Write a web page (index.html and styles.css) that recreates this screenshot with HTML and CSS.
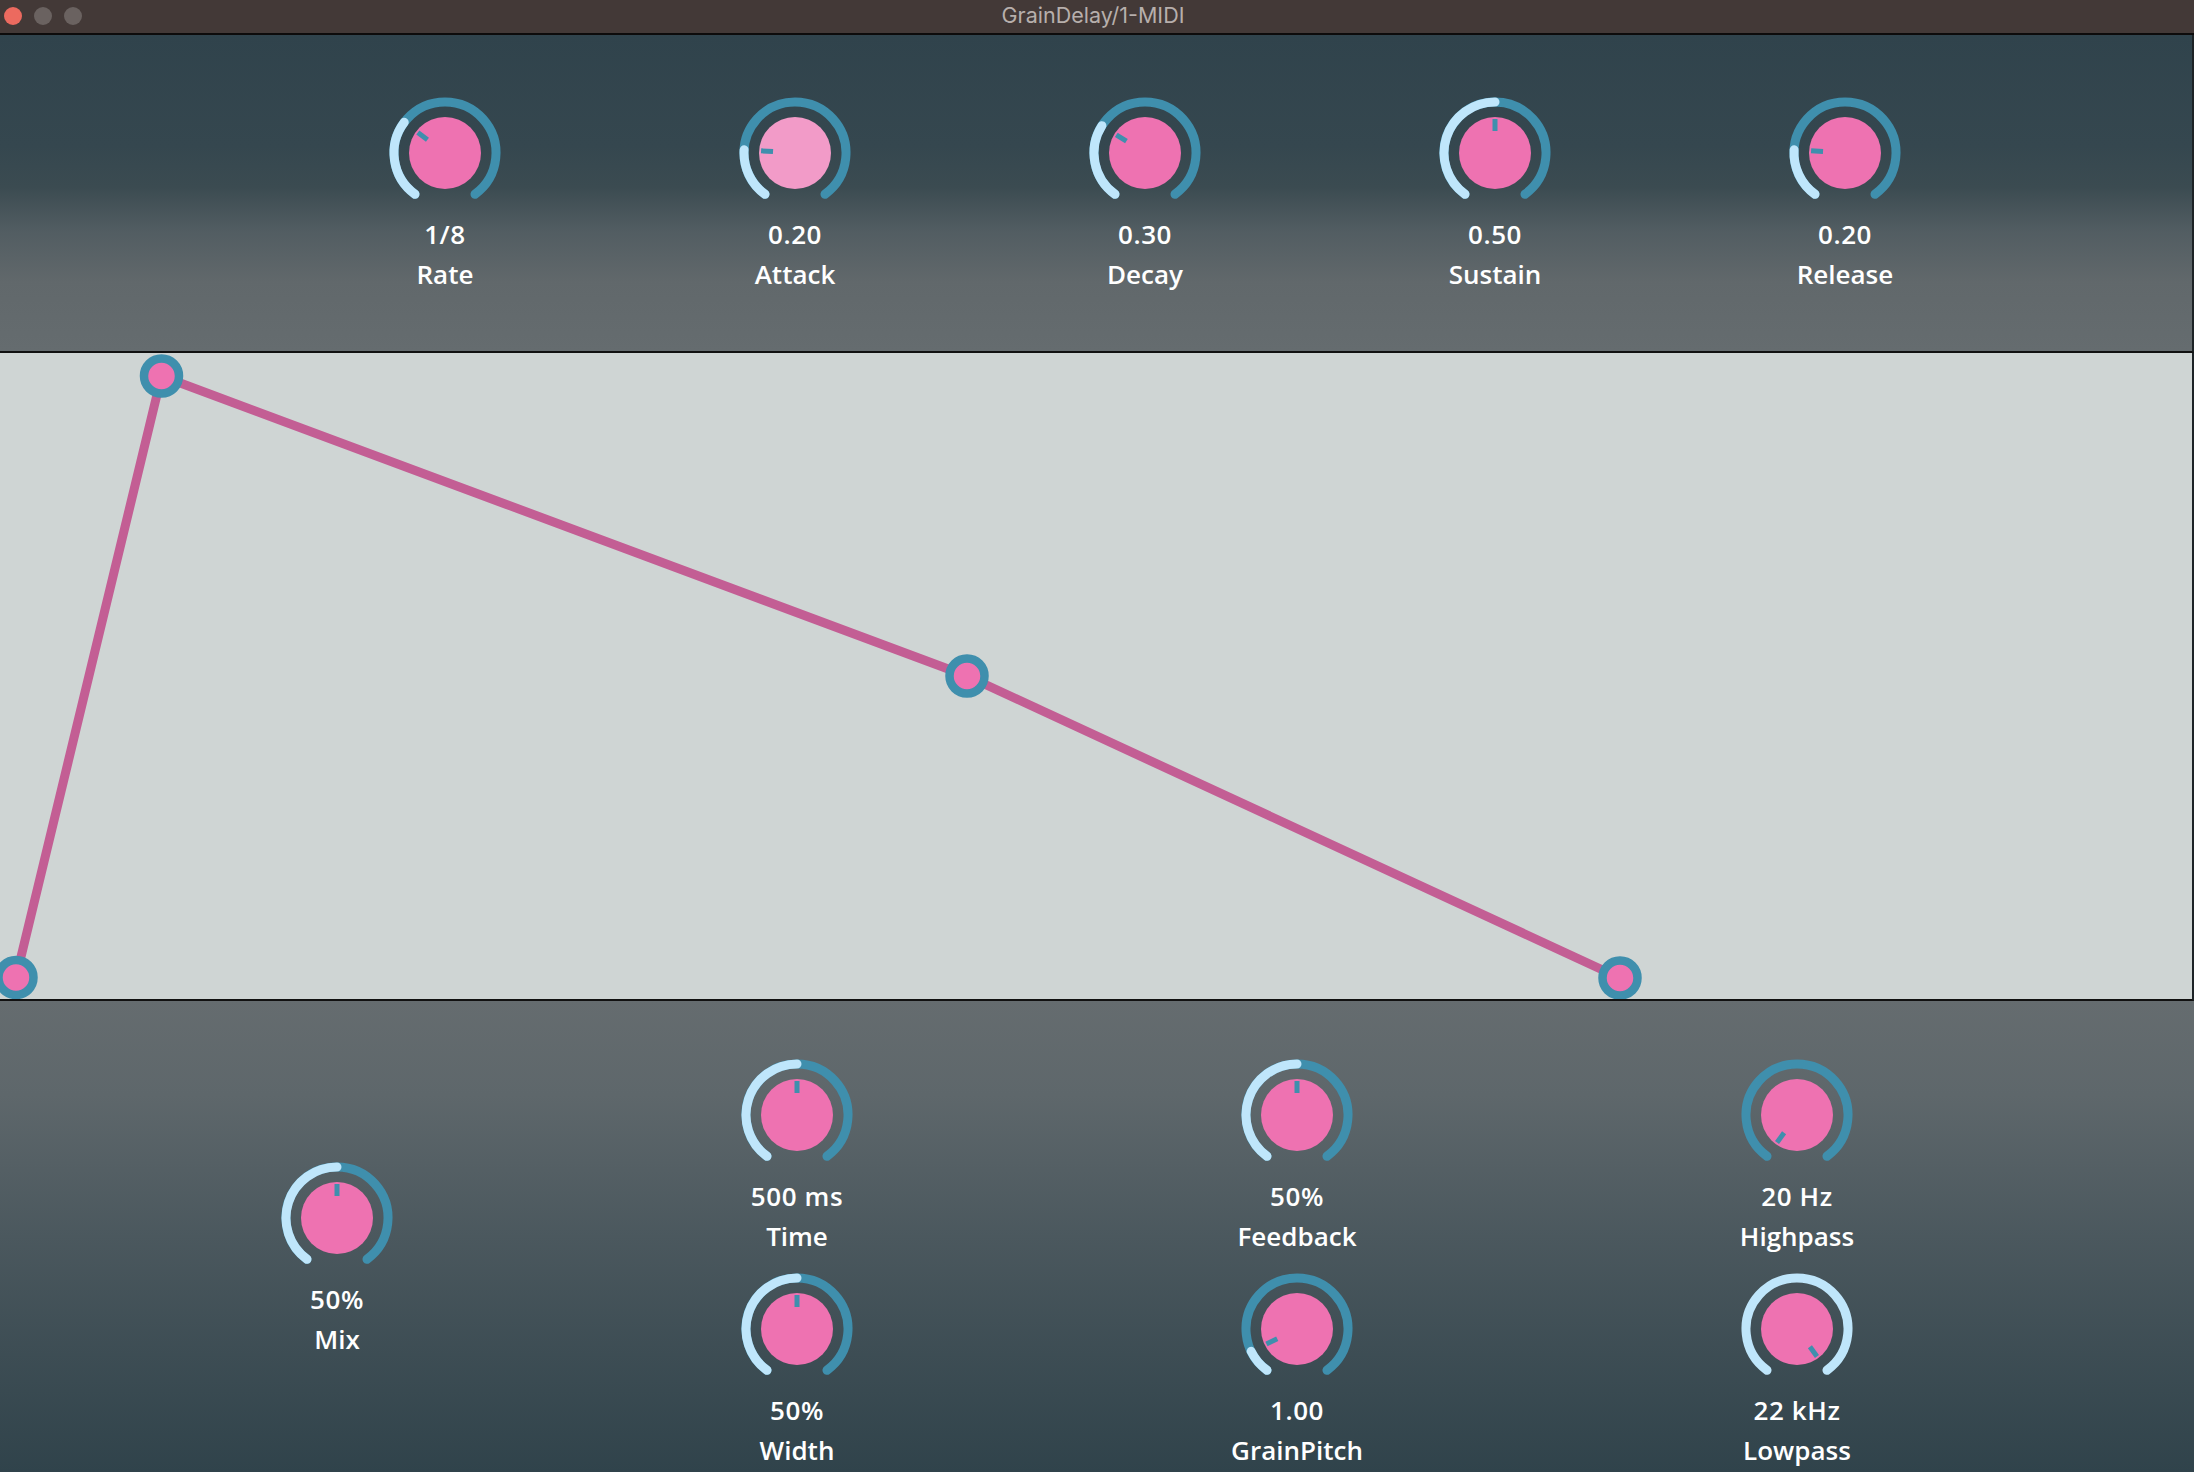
FILE: index.html
```html
<!DOCTYPE html>
<html>
<head>
<meta charset="utf-8">
<title>GrainDelay/1-MIDI</title>
<link rel="stylesheet" href="styles.css">
</head>
<body>
<div class="window">
  <div class="titlebar">
    <div class="lights">
      <span class="light red"></span>
      <span class="light grey"></span>
      <span class="light grey"></span>
    </div>
    <div class="title">GrainDelay/1-MIDI</div>
    <div></div>
  </div>

  <div class="top-panel">
    <div class="knob-cell">
      <svg class="knob" viewBox="0 0 120 120" width="120" height="120">
        <path class="track" d="M30.02 101.26 A51 51 0 1 1 89.98 101.26"/>
        <path class="track val" d="M30.02 101.26 A51 51 0 0 1 19.27 29.31"/>
        <circle class="cap" cx="60" cy="60" r="36"/>
        <rect class="ind" x="57.5" y="26" width="5" height="12" transform="rotate(-53 60 60)"/>
      </svg>
      <div class="value">1/8</div>
      <div class="label">Rate</div>
    </div>
    <div class="knob-cell">
      <svg class="knob" viewBox="0 0 120 120" width="120" height="120">
        <path class="track" d="M30.02 101.26 A51 51 0 1 1 89.98 101.26"/>
        <path class="track val" d="M30.02 101.26 A51 51 0 0 1 9.10 56.80"/>
        <circle class="cap hover" cx="60" cy="60" r="36"/>
        <rect class="ind" x="57.5" y="26" width="5" height="12" transform="rotate(-86.4 60 60)"/>
      </svg>
      <div class="value">0.20</div>
      <div class="label">Attack</div>
    </div>
    <div class="knob-cell">
      <svg class="knob" viewBox="0 0 120 120" width="120" height="120">
        <path class="track" d="M30.02 101.26 A51 51 0 1 1 89.98 101.26"/>
        <path class="track val" d="M30.02 101.26 A51 51 0 0 1 16.94 32.67"/>
        <circle class="cap" cx="60" cy="60" r="36"/>
        <rect class="ind" x="57.5" y="26" width="5" height="12" transform="rotate(-57.6 60 60)"/>
      </svg>
      <div class="value">0.30</div>
      <div class="label">Decay</div>
    </div>
    <div class="knob-cell">
      <svg class="knob" viewBox="0 0 120 120" width="120" height="120">
        <path class="track" d="M30.02 101.26 A51 51 0 1 1 89.98 101.26"/>
        <path class="track val" d="M30.02 101.26 A51 51 0 0 1 60 9"/>
        <circle class="cap" cx="60" cy="60" r="36"/>
        <rect class="ind" x="57.5" y="26" width="5" height="12"/>
      </svg>
      <div class="value">0.50</div>
      <div class="label">Sustain</div>
    </div>
    <div class="knob-cell">
      <svg class="knob" viewBox="0 0 120 120" width="120" height="120">
        <path class="track" d="M30.02 101.26 A51 51 0 1 1 89.98 101.26"/>
        <path class="track val" d="M30.02 101.26 A51 51 0 0 1 9.10 56.80"/>
        <circle class="cap" cx="60" cy="60" r="36"/>
        <rect class="ind" x="57.5" y="26" width="5" height="12" transform="rotate(-86.4 60 60)"/>
      </svg>
      <div class="value">0.20</div>
      <div class="label">Release</div>
    </div>
  </div>

  <div class="envelope">
    <svg class="env-svg" viewBox="0 0 2192 646" width="2192" height="646">
      <polyline class="env-line" points="16,624.5 161.5,23 967,323 1620,625"/>
      <circle class="env-pt" cx="16" cy="624.5" r="17.5"/>
      <circle class="env-pt" cx="161.5" cy="23" r="17.5"/>
      <circle class="env-pt" cx="967" cy="323" r="17.5"/>
      <circle class="env-pt" cx="1620" cy="625" r="17.5"/>
    </svg>
  </div>

  <div class="bottom-panel">
    <div class="mix-col">
      <div class="knob-cell">
        <svg class="knob" viewBox="0 0 120 120" width="120" height="120">
          <path class="track" d="M30.02 101.26 A51 51 0 1 1 89.98 101.26"/>
          <path class="track val" d="M30.02 101.26 A51 51 0 0 1 60 9"/>
          <circle class="cap" cx="60" cy="60" r="36"/>
          <rect class="ind" x="57.5" y="26" width="5" height="12"/>
        </svg>
        <div class="value">50%</div>
        <div class="label">Mix</div>
      </div>
    </div>
    <div class="fx-grid">
      <div class="knob-cell">
        <svg class="knob" viewBox="0 0 120 120" width="120" height="120">
          <path class="track" d="M30.02 101.26 A51 51 0 1 1 89.98 101.26"/>
          <path class="track val" d="M30.02 101.26 A51 51 0 0 1 60 9"/>
          <circle class="cap" cx="60" cy="60" r="36"/>
          <rect class="ind" x="57.5" y="26" width="5" height="12"/>
        </svg>
        <div class="value">500 ms</div>
        <div class="label">Time</div>
      </div>
      <div class="knob-cell">
        <svg class="knob" viewBox="0 0 120 120" width="120" height="120">
          <path class="track" d="M30.02 101.26 A51 51 0 1 1 89.98 101.26"/>
          <path class="track val" d="M30.02 101.26 A51 51 0 0 1 60 9"/>
          <circle class="cap" cx="60" cy="60" r="36"/>
          <rect class="ind" x="57.5" y="26" width="5" height="12"/>
        </svg>
        <div class="value">50%</div>
        <div class="label">Feedback</div>
      </div>
      <div class="knob-cell">
        <svg class="knob" viewBox="0 0 120 120" width="120" height="120">
          <path class="track" d="M30.02 101.26 A51 51 0 1 1 89.98 101.26"/>
          <circle class="cap" cx="60" cy="60" r="36"/>
          <rect class="ind" x="57.5" y="26" width="5" height="12" transform="rotate(-144 60 60)"/>
        </svg>
        <div class="value">20 Hz</div>
        <div class="label">Highpass</div>
      </div>
      <div class="knob-cell">
        <svg class="knob" viewBox="0 0 120 120" width="120" height="120">
          <path class="track" d="M30.02 101.26 A51 51 0 1 1 89.98 101.26"/>
          <path class="track val" d="M30.02 101.26 A51 51 0 0 1 60 9"/>
          <circle class="cap" cx="60" cy="60" r="36"/>
          <rect class="ind" x="57.5" y="26" width="5" height="12"/>
        </svg>
        <div class="value">50%</div>
        <div class="label">Width</div>
      </div>
      <div class="knob-cell">
        <svg class="knob" viewBox="0 0 120 120" width="120" height="120">
          <path class="track" d="M30.02 101.26 A51 51 0 1 1 89.98 101.26"/>
          <path class="track val" d="M30.02 101.26 A51 51 0 0 1 14.16 82.36"/>
          <circle class="cap" cx="60" cy="60" r="36"/>
          <rect class="ind" x="57.5" y="26" width="5" height="12" transform="rotate(-116 60 60)"/>
        </svg>
        <div class="value">1.00</div>
        <div class="label">GrainPitch</div>
      </div>
      <div class="knob-cell">
        <svg class="knob" viewBox="0 0 120 120" width="120" height="120">
          <path class="track val" d="M30.02 101.26 A51 51 0 1 1 89.98 101.26"/>
          <circle class="cap" cx="60" cy="60" r="36"/>
          <rect class="ind" x="57.5" y="26" width="5" height="12" transform="rotate(144 60 60)"/>
        </svg>
        <div class="value">22 kHz</div>
        <div class="label">Lowpass</div>
      </div>
    </div>
  </div>
</div>
</body>
</html>
```

FILE: styles.css
```css
* { box-sizing: border-box; }

html, body {
  margin: 0;
  padding: 0;
  width: 2194px;
  height: 1472px;
  overflow: hidden;
  background: #2f434b;
}

.window {
  width: 2194px;
  height: 1472px;
  display: flex;
  flex-direction: column;
  font-family: "Open Sans", "DejaVu Sans", sans-serif;
}

.titlebar {
  height: 35px;
  flex: 0 0 35px;
  background: #433937;
  border-bottom: 2px solid #0d0b0b;
  display: grid;
  grid-template-columns: 1fr auto 1fr;
  align-items: center;
}

.lights {
  display: flex;
  gap: 12px;
  padding-left: 4px;
  padding-bottom: 2px;
}

.light {
  width: 18px;
  height: 18px;
  border-radius: 50%;
  display: block;
}

.light.red { background: #ec6a5f; }
.light.grey { background: #6a6260; }

.title {
  font-family: "Inter", "Liberation Sans", sans-serif;
  font-size: 21.5px;
  color: #b7afac;
  padding-bottom: 3px;
  padding-right: 8px;
}

.top-panel {
  height: 318px;
  flex: 0 0 318px;
  background: linear-gradient(to bottom, #30434c 0%, #35474f 35%, #3b4b51 48%, #525d62 62%, #61686b 78%, #656c6f 100%);
  border-bottom: 2px solid #111;
  border-right: 2px solid #1d2326;
  display: flex;
  padding-left: 270px;
  padding-top: 58px;
}

.top-panel .knob-cell {
  width: 350px;
}

.knob-cell {
  display: flex;
  flex-direction: column;
  align-items: center;
}

.knob {
  display: block;
  width: 120px;
  height: 120px;
}

.track {
  fill: none;
  stroke: #3f8fad;
  stroke-width: 9;
  stroke-linecap: round;
}

.track.val {
  stroke: #bfe6fb;
}

.cap {
  fill: #ee72b1;
}

.cap.hover {
  fill: #f29bc8;
}

.ind {
  fill: #3f8fad;
}

.value, .label {
  color: #ffffff;
  font-size: 26px;
  font-weight: 600;
  line-height: 39px;
  white-space: nowrap;
}

.value {
  letter-spacing: 0.6px;
  margin-top: 2px;
}

.label {
  margin-top: 1px;
}

.envelope {
  height: 648px;
  flex: 0 0 648px;
  background: #cfd5d4;
  border-bottom: 2px solid #111;
  border-right: 2px solid #1d2326;
}

.env-svg {
  display: block;
}

.env-line {
  fill: none;
  stroke: #c35e94;
  stroke-width: 9;
  stroke-linejoin: round;
}

.env-pt {
  fill: #ee72b1;
  stroke: #3f8fad;
  stroke-width: 8.5;
}

.bottom-panel {
  flex: 1 1 auto;
  background: linear-gradient(to bottom, #656c6f 0%, #5e676b 20%, #4b585e 50%, #3d4d54 75%, #30434b 100%);
  display: flex;
  padding-left: 217px;
}

.mix-col {
  width: 240px;
  padding-top: 157px;
  margin-right: 90px;
}

.fx-grid {
  display: grid;
  grid-template-columns: repeat(3, 500px);
  row-gap: 13px;
  padding-top: 54px;
  align-content: start;
}
```
